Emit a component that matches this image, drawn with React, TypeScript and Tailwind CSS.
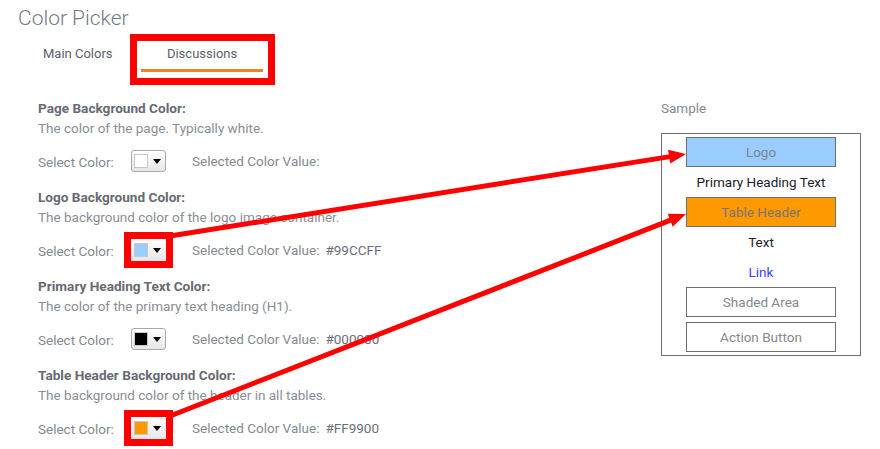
import React from "react";

type Section = {
  title: string;
  desc: string;
  color: string;
  value: string;
  highlight?: boolean;
};

const sections: Section[] = [
  { title: "Page Background Color:", desc: "The color of the page. Typically white.", color: "#ffffff", value: "" },
  { title: "Logo Background Color:", desc: "The background color of the logo image container.", color: "#99ccff", value: "#99CCFF", highlight: true },
  { title: "Primary Heading Text Color:", desc: "The color of the primary text heading (H1).", color: "#000000", value: "#000000" },
  { title: "Table Header Background Color:", desc: "The background color of the header in all tables.", color: "#ff9900", value: "#FF9900", highlight: true },
];

function Picker({ color, highlight }: { color: string; highlight?: boolean }) {
  return (
    <div
      className={
        highlight
          ? "flex h-[22px] w-[35px] items-center bg-gradient-to-b from-white to-[#e6e6e6] outline-[7px] outline-solid outline-[#ff0000]"
          : "flex h-[22px] w-[35px] items-center rounded-[3px] border border-[#a9a9a9] bg-gradient-to-b from-white to-[#e6e6e6]"
      }
    >
      <div
        className={highlight ? "ml-[3px] h-[14px] w-[14px] border border-[#c8c8c8]" : "ml-[2px] h-[14px] w-[14px] border border-[#c8c8c8]"}
        style={{ backgroundColor: color }}
      />
      <svg width="8" height="5" viewBox="0 0 8 5" className="ml-[5px]">
        <polygon points="0,0 8,0 4,5" fill="#000" />
      </svg>
    </div>
  );
}

export default function App() {
  return (
    <div
      className="relative h-[449px] w-[880px] overflow-hidden bg-white"
      style={{ fontFamily: "Roboto, 'Noto Sans', sans-serif" }}
    >
      <div className="pl-[18px] pt-[5px] text-[21px] leading-[26px] font-light text-[#737987]">Color Picker</div>

      <div className="mt-[10px] flex h-[37px] items-start text-[13px] text-[#5b5f6b]">
        <div className="ml-[43px] mt-[5px] leading-[16px]">Main Colors</div>
        <div className="ml-[24px] flex h-[37px] w-[131px] flex-col items-center outline-[7px] outline-solid outline-[#ff0000]">
          <div className="mt-[5px] leading-[16px]">Discussions</div>
          <div className="mt-[7px] h-[3px] w-[122px] bg-[#f58025]" />
        </div>
      </div>

      <div className="flex">
        <div className="w-[661px] shrink-0 pl-[38px] pt-[20px]">
          {sections.map((s) => (
            <div key={s.title} className="h-[89px]">
              <div className="text-[13.6px] leading-[20px] font-bold text-[#676a72]">{s.title}</div>
              <div className="text-[13.5px] leading-[20px] text-[#8a8e96]">{s.desc}</div>
              <div className="mt-[12px] flex h-[22px] items-center text-[13.5px] text-[#858991]">
                <div className="w-[93px] pt-[2px]">Select Color:</div>
                <Picker color={s.color} highlight={s.highlight} />
                <div className="ml-[26px]">Selected Color Value:</div>
                <div className="ml-[6px] text-[#6b6e76]">{s.value}</div>
              </div>
            </div>
          ))}
        </div>

        <div className="w-[200px] shrink-0 pt-[22px]">
          <div className="text-[13.5px] leading-[16px] text-[#858991]">Sample</div>
          <div className="mt-[17px] flex h-[223px] flex-col items-center border border-[#6e6e78] pt-[3px] text-[13.5px]">
            <div className="flex h-[30px] w-[150px] shrink-0 items-center justify-center border border-[#6e6e78] bg-[#99ccff] text-[#7d8594]">Logo</div>
            <div className="flex h-[30px] items-center text-[#1c1c2a]">Primary Heading Text</div>
            <div className="flex h-[30px] w-[150px] shrink-0 items-center justify-center border border-[#6e6e78] bg-[#ff9900] text-[#7a7470]">Table Header</div>
            <div className="flex h-[30px] items-center text-[#1c1c2a]">Text</div>
            <div className="flex h-[30px] items-center text-[#3b3bff]">Link</div>
            <div className="flex h-[30px] w-[150px] shrink-0 items-center justify-center border border-[#6e6e78] text-[#858991]">Shaded Area</div>
            <div className="mt-[5px] flex h-[30px] w-[150px] shrink-0 items-center justify-center border border-[#6e6e78] text-[#858991]">Action Button</div>
          </div>
        </div>
      </div>

      <svg className="pointer-events-none absolute left-0 top-0" width="880" height="449" viewBox="0 0 880 449">
        <line x1="170" y1="236" x2="670" y2="156.6" stroke="#ff0000" strokeWidth="5" />
        <polygon points="686,154 670.3,163.5 668.1,149.7" fill="#ff0000" />
        <line x1="170" y1="416" x2="670.5" y2="220.2" stroke="#ff0000" strokeWidth="5" />
        <polygon points="686,214 672.7,226.7 667.7,213.7" fill="#ff0000" />
      </svg>
    </div>
  );
}
